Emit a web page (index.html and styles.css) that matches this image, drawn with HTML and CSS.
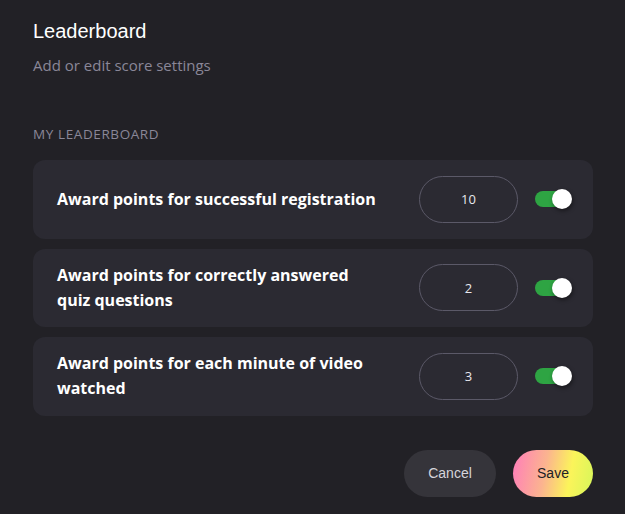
FILE: index.html
```html
<!DOCTYPE html>
<html>
<head>
<meta charset="utf-8">
<link rel="stylesheet" href="styles.css">
</head>
<body>
<div class="panel">
  <h1 class="title">Leaderboard</h1>
  <p class="subtitle">Add or edit score settings</p>
  <h2 class="section">MY LEADERBOARD</h2>
  <div class="list">
    <div class="card">
      <div class="label">Award points for successful registration</div>
      <div class="input">10</div>
      <div class="toggle"><span class="knob"></span></div>
    </div>
    <div class="card">
      <div class="label">Award points for correctly answered quiz questions</div>
      <div class="input">2</div>
      <div class="toggle"><span class="knob"></span></div>
    </div>
    <div class="card">
      <div class="label">Award points for each minute of video watched</div>
      <div class="input">3</div>
      <div class="toggle"><span class="knob"></span></div>
    </div>
  </div>
  <div class="actions">
    <button class="btn cancel">Cancel</button>
    <button class="btn save">Save</button>
  </div>
</div>
</body>
</html>
```
FILE: styles.css
```css
html, body {
  margin: 0;
  padding: 0;
  background: #222126;
}
.panel {
  padding: 19px 32px 0 33px;
  font-family: "Open Sans", "Liberation Sans", sans-serif;
  color: #fff;
}
.title {
  margin: 0;
  font-family: "Liberation Sans", Arial, sans-serif;
  font-weight: 400;
  font-size: 20px;
  line-height: 24px;
  color: #fff;
}
.subtitle {
  margin: 13px 0 0;
  font-size: 15px;
  line-height: 18px;
  color: #8a8798;
}
.section {
  margin: 51px 0 0;
  font-size: 13.5px;
  font-weight: 400;
  line-height: 18px;
  letter-spacing: 0.6px;
  color: #8a8798;
}
.list {
  margin-top: 17px;
  display: flex;
  flex-direction: column;
  gap: 10px;
}
.card {
  display: flex;
  align-items: center;
  height: 78.5px;
  box-sizing: border-box;
  padding: 0 21px 0 24px;
  background: #2b2a32;
  border-radius: 12px;
}
.label {
  flex: 1;
  max-width: 322px;
  margin-right: auto;
  font-size: 16px;
  font-weight: 700;
  line-height: 25px;
  color: #fff;
}
.input {
  width: 99px;
  height: 47px;
  box-sizing: border-box;
  border: 1px solid #5b5968;
  border-radius: 24px;
  display: flex;
  align-items: center;
  justify-content: center;
  font-size: 13px;
  color: #e8e7ee;
  margin-left: auto;
}
.toggle {
  position: relative;
  width: 37px;
  height: 20px;
  margin-left: 17px;
}
.toggle::before {
  content: "";
  position: absolute;
  left: 0;
  top: 2px;
  width: 30px;
  height: 16px;
  background: #2ea443;
  border-radius: 8px;
}
.knob {
  position: absolute;
  top: 0;
  right: 0;
  width: 20px;
  height: 20px;
  border-radius: 50%;
  background: #fff;
  box-shadow: 1px 2px 4px rgba(0,0,0,0.45);
}
.actions {
  display: flex;
  justify-content: flex-end;
  gap: 17px;
  margin-top: 34px;
}
.btn {
  height: 47px;
  border: none;
  border-radius: 24px;
  font-family: "Liberation Sans", Arial, sans-serif;
  font-size: 14px;
  padding: 0;
}
.cancel {
  width: 92px;
  background: #35343a;
  color: #d6d5db;
}
.save {
  width: 80px;
  background: linear-gradient(100deg, #ff7dba 0%, #fbb48f 40%, #fbf45a 70%, #d6f65a 100%);
  color: #222126;
}
```
